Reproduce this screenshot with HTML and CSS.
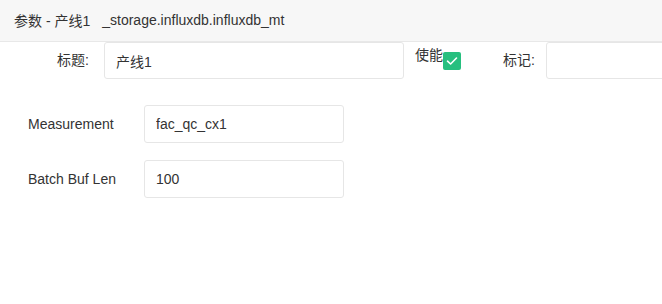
FILE: index.html
```html
<!DOCTYPE html>
<html lang="zh-CN">
<head>
    <meta charset="UTF-8">
    <meta name="viewport" content="width=device-width, initial-scale=1.0">
    <title>参数 - 产线1</title>
    <link rel="stylesheet" href="styles.css">
</head>
<body>
    <div class="panel-header">
        <span class="panel-title">参数 - 产线1</span>
        <span class="panel-path">_storage.influxdb.influxdb_mt</span>
    </div>

    <div class="panel-body">
        <div class="top-row">
            <label class="top-label" for="title">标题:</label>
            <input type="text" id="title" class="field field-title" value="产线1">

            <div class="enable-group">
                <span class="enable-label">使能</span>
                <span class="check-box">
                    <svg width="12" height="10" viewBox="0 0 12 10">
                        <path d="M1.5 5.2 L4.6 8 L10.5 2" fill="none" stroke="#fff" stroke-width="1.6" stroke-linecap="round" stroke-linejoin="round"/>
                    </svg>
                </span>
            </div>

            <label class="mark-label" for="mark">标记:</label>
            <input type="text" id="mark" class="field field-mark" value="">
        </div>

        <div class="form-row">
            <label class="row-label" for="measurement">Measurement</label>
            <input type="text" id="measurement" class="field field-short" value="fac_qc_cx1">
        </div>

        <div class="form-row">
            <label class="row-label" for="buflen">Batch Buf Len</label>
            <input type="text" id="buflen" class="field field-short" value="100">
        </div>
    </div>
</body>
</html>
```

FILE: styles.css
```css
* {
    box-sizing: border-box;
    margin: 0;
    padding: 0;
}

body {
    font-family: 'Liberation Sans', 'Noto Sans CJK SC', sans-serif;
    font-size: 14px;
    color: #333;
    background: #fff;
    overflow: hidden;
}

.panel-header {
    height: 42px;
    background: #f7f7f7;
    border-bottom: 1px solid #e8e8e8;
    display: flex;
    align-items: center;
    padding: 0 14px 1px;
    white-space: nowrap;
}

.panel-path {
    margin-left: 12px;
}

/* 右侧输入框超出面板，裁掉 */
.top-row {
    display: flex;
    align-items: flex-start;
    white-space: nowrap;
    overflow: hidden;
}

.top-row > * {
    flex-shrink: 0;
}

.top-label {
    width: 90px;
    height: 37px;
    line-height: 37px;
    text-align: right;
    padding-right: 1px;
    margin-right: 14px;
}

.field {
    height: 37px;
    border: 1px solid #e6e6e6;
    border-radius: 3px;
    padding: 0 11px;
    font-family: 'Liberation Sans', 'Noto Sans CJK SC', sans-serif;
    font-size: 14px;
    color: #333;
    background: #fff;
    outline: none;
}

.field-title {
    width: 300px;
}

.enable-group {
    display: flex;
    align-items: flex-start;
    margin-left: 11px;
    padding-top: 3px;
}

.enable-label {
    line-height: 20px;
}

.check-box {
    width: 18px;
    height: 18px;
    margin-top: 7px;
    background: #26bf7f;
    border-radius: 2px;
    display: flex;
    align-items: center;
    justify-content: center;
}

.mark-label {
    height: 37px;
    line-height: 37px;
    margin-left: 42px;
    margin-right: 11px;
}

.field-mark {
    width: 200px;
}

.form-row {
    display: flex;
    align-items: center;
    margin-top: 17px;
    padding-left: 28px;
}

.top-row + .form-row {
    margin-top: 26px;
}

.row-label {
    width: 116px;
}

.field-short {
    width: 200px;
    height: 38px;
}
```
